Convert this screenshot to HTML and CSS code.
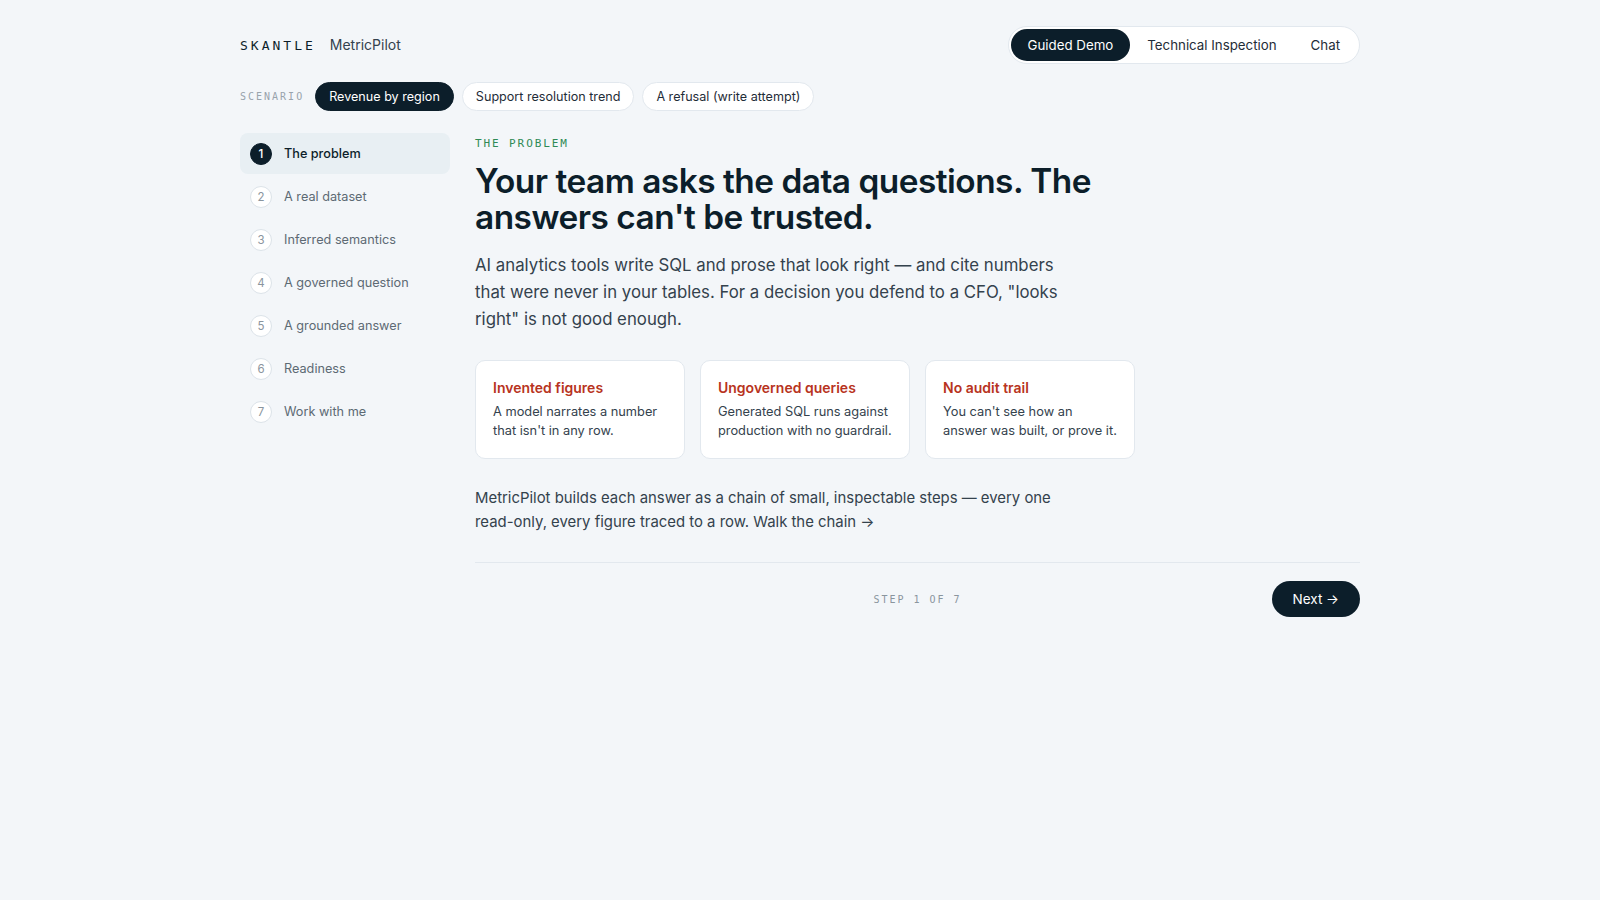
FILE: index.html
```html
<!DOCTYPE html>
<html lang="en">
<head>
  <meta charset="UTF-8" />
  <meta name="viewport" content="width=device-width, initial-scale=1.0"/>
  <title>Skantle MetricPilot - Guided Demo</title>
  <link rel="stylesheet" href="styles.css">
</head>
<body>
  <div class="page">
    <header class="topbar">
      <div class="brand">
        <span class="brand-mark">SKANTLE</span>
        <span class="brand-product">MetricPilot</span>
      </div>
      <nav class="modes">
        <button class="mode active">Guided Demo</button>
        <button class="mode">Technical Inspection</button>
        <button class="mode">Chat</button>
      </nav>
    </header>

    <div class="scenarios">
      <span class="scenario-label">SCENARIO</span>
      <button class="scenario active">Revenue by region</button>
      <button class="scenario">Support resolution trend</button>
      <button class="scenario">A refusal (write attempt)</button>
    </div>

    <div class="layout">
      <ol class="steps">
        <li class="step current"><span class="num">1</span>The problem</li>
        <li class="step"><span class="num">2</span>A real dataset</li>
        <li class="step"><span class="num">3</span>Inferred semantics</li>
        <li class="step"><span class="num">4</span>A governed question</li>
        <li class="step"><span class="num">5</span>A grounded answer</li>
        <li class="step"><span class="num">6</span>Readiness</li>
        <li class="step"><span class="num">7</span>Work with me</li>
      </ol>

      <main class="content">
        <div class="eyebrow">THE PROBLEM</div>
        <h1>Your team asks the data questions. The answers can't be trusted.</h1>
        <p class="lead">AI analytics tools write SQL and prose that look right — and cite numbers that were never in your tables. For a decision you defend to a CFO, "looks right" is not good enough.</p>

        <div class="cards">
          <div class="card">
            <h3>Invented figures</h3>
            <p>A model narrates a number that isn't in any row.</p>
          </div>
          <div class="card">
            <h3>Ungoverned queries</h3>
            <p>Generated SQL runs against production with no guardrail.</p>
          </div>
          <div class="card">
            <h3>No audit trail</h3>
            <p>You can't see how an answer was built, or prove it.</p>
          </div>
        </div>

        <p class="closing">MetricPilot builds each answer as a chain of small, inspectable steps — every one read-only, every figure traced to a row. Walk the chain →</p>

        <div class="pager">
          <span></span>
          <span class="counter">STEP 1 OF 7</span>
          <button class="next">Next →</button>
        </div>
      </main>
    </div>
  </div>
</body>
</html>
```

FILE: styles.css
```css
body {
  margin: 0;
  font-family: Inter, 'Noto Sans', sans-serif;
  background: #f3f6f9;
  color: #0c1e2a;
}

button {
  font-family: inherit;
  cursor: pointer;
}

.page {
  max-width: 1120px;
  margin: 0 auto;
  padding: 26px 0 40px;
}

.topbar {
  display: flex;
  align-items: center;
  justify-content: space-between;
}

.brand {
  display: flex;
  align-items: baseline;
  gap: 14px;
  margin-top: -2px;
}
.brand-mark {
  font-family: 'DejaVu Sans Mono', monospace;
  font-size: 13px;
  letter-spacing: 3px;
  color: #0c1e2a;
}
.brand-product {
  font-size: 14px;
  color: #34424d;
}

.modes {
  display: flex;
  background: #fff;
  border: 1px solid #e2e8ee;
  border-radius: 20px;
  padding: 2px;
}
.mode {
  border: 0;
  background: transparent;
  font-size: 13.3px;
  color: #1f2d38;
  padding: 8px 17px;
  border-radius: 17px;
}
.mode.active {
  background: #0c1e2a;
  color: #fff;
}

.scenarios {
  display: flex;
  align-items: center;
  gap: 8px;
  margin-top: 18px;
}
.scenario-label {
  font-family: 'DejaVu Sans Mono', monospace;
  font-size: 10px;
  letter-spacing: 2px;
  color: #98a3ac;
  margin-right: 3px;
}
.scenario {
  background: #fff;
  border: 1px solid #e2e8ee;
  border-radius: 16px;
  font-size: 12.6px;
  color: #1f2d38;
  padding: 6px 13px;
}
.scenario.active {
  background: #0c1e2a;
  border-color: #0c1e2a;
  color: #fff;
}

.layout {
  display: flex;
  gap: 25px;
  margin-top: 22px;
}

.steps {
  list-style: none;
  margin: 0;
  padding: 0;
  width: 210px;
  flex-shrink: 0;
  display: flex;
  flex-direction: column;
  gap: 2px;
}
.step {
  display: flex;
  align-items: center;
  gap: 12px;
  height: 41px;
  padding: 0 10px;
  border-radius: 8px;
  font-size: 12.7px;
  color: #5d6a74;
}
.step .num {
  width: 22px;
  height: 22px;
  border-radius: 50%;
  border: 1px solid #dce3e9;
  background: #fff;
  box-sizing: border-box;
  display: flex;
  align-items: center;
  justify-content: center;
  font-size: 11.5px;
  color: #8a959e;
}
.step.current {
  background: #e8eff3;
  color: #0c1e2a;
  font-weight: 500;
}
.step.current .num {
  background: #0c1e2a;
  border-color: #0c1e2a;
  color: #fff;
}

.content {
  flex: 1;
  padding-top: 4px;
}

.eyebrow {
  font-family: 'DejaVu Sans Mono', monospace;
  font-size: 11px;
  letter-spacing: 1.9px;
  color: #2f8a55;
}

h1 {
  margin: 13px 0 0;
  max-width: 640px;
  font-size: 33.4px;
  line-height: 36px;
  font-weight: 600;
  letter-spacing: -0.5px;
  color: #0c1e2a;
}

.lead {
  margin: 17px 0 0;
  max-width: 600px;
  font-size: 16.8px;
  line-height: 27px;
  color: #34424d;
}

.cards {
  display: flex;
  gap: 15px;
  margin-top: 27px;
}
.card {
  width: 210px;
  box-sizing: border-box;
  background: #fff;
  border: 1px solid #e2e8ee;
  border-radius: 10px;
  padding: 18px 17px 18px;
}
.card h3 {
  margin: 0;
  font-size: 14px;
  font-weight: 600;
  color: #b83321;
}
.card p {
  margin: 7px 0 0;
  font-size: 12.8px;
  line-height: 18.5px;
  color: #34424d;
}

.closing {
  margin: 27px 0 0;
  max-width: 590px;
  font-size: 14.9px;
  line-height: 24px;
  color: #34424d;
}

.pager {
  display: grid;
  grid-template-columns: 1fr auto 1fr;
  align-items: center;
  margin-top: 28px;
  padding-top: 18px;
  border-top: 1px solid #e2e8ee;
}
.counter {
  font-family: 'DejaVu Sans Mono', monospace;
  font-size: 10px;
  letter-spacing: 2px;
  color: #8a959e;
}
.next {
  justify-self: end;
  background: #0c1e2a;
  color: #fff;
  border: 0;
  border-radius: 19px;
  font-size: 13.5px;
  padding: 10px 21px;
}
```
